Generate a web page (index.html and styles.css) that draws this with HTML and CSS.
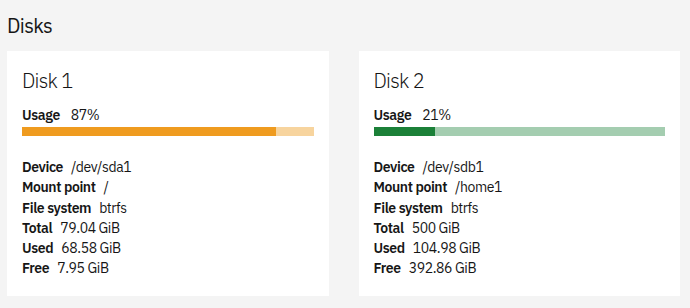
FILE: index.html
```html
<!DOCTYPE html>
<html lang="en">
<head>
<meta charset="utf-8">
<title>Disks</title>
<link rel="stylesheet" href="styles.css">
</head>
<body>
<h1 class="page-title">Disks</h1>
<div class="grid">
  <section class="card">
    <h2 class="card-title">Disk 1</h2>
    <div class="usage"><span class="label">Usage</span><span class="value">87%</span></div>
    <div class="bar bar-orange"><div class="fill" style="width:87%"></div></div>
    <dl class="details">
      <div class="row"><dt>Device</dt><dd>/dev/sda1</dd></div>
      <div class="row"><dt>Mount point</dt><dd>/</dd></div>
      <div class="row"><dt>File system</dt><dd>btrfs</dd></div>
      <div class="row"><dt>Total</dt><dd>79.04 GiB</dd></div>
      <div class="row"><dt>Used</dt><dd>68.58 GiB</dd></div>
      <div class="row"><dt>Free</dt><dd>7.95 GiB</dd></div>
    </dl>
  </section>
  <section class="card">
    <h2 class="card-title">Disk 2</h2>
    <div class="usage"><span class="label">Usage</span><span class="value">21%</span></div>
    <div class="bar bar-green"><div class="fill" style="width:21%"></div></div>
    <dl class="details">
      <div class="row"><dt>Device</dt><dd>/dev/sdb1</dd></div>
      <div class="row"><dt>Mount point</dt><dd>/home1</dd></div>
      <div class="row"><dt>File system</dt><dd>btrfs</dd></div>
      <div class="row"><dt>Total</dt><dd>500 GiB</dd></div>
      <div class="row"><dt>Used</dt><dd>104.98 GiB</dd></div>
      <div class="row"><dt>Free</dt><dd>392.86 GiB</dd></div>
    </dl>
  </section>
</div>
</body>
</html>
```
FILE: styles.css
```css
html, body {
  margin: 0;
  padding: 0;
  background: #f4f4f4;
  color: #161616;
  font-family: "IBM Plex Sans", "Noto Sans", sans-serif;
}
.page-title {
  margin: 0;
  padding: 12px 7px 0 7px;
  font-size: 20px;
  font-weight: 400;
  line-height: 28px;
  letter-spacing: -0.6px;
}
.grid {
  display: grid;
  grid-template-columns: 1fr 1fr;
  gap: 30px;
  padding: 11px 10px 0 7px;
}
.card {
  background: #fff;
  padding: 16px 15px 17px 15px;
}
.card-title {
  margin: 0;
  font-size: 20px;
  font-weight: 300;
  line-height: 28px;
  letter-spacing: -0.7px;
}
.usage {
  margin-top: 11px;
  font-size: 14px;
  line-height: 18px;
  display: flex;
  gap: 11px;
}
.label, dt {
  font-weight: 600;
  letter-spacing: -0.4px;
}
.value, dd {
  letter-spacing: -0.4px;
}
.bar {
  margin-top: 3px;
  height: 9px;
  display: flex;
}
.bar .fill { height: 100%; }
.bar-orange { background: #f7d49e; }
.bar-orange .fill { background: #ef9b1f; }
.bar-green { background: #a4cdb0; }
.bar-green .fill { background: #1b8038; }
.details {
  margin: 21px 0 0 0;
  font-size: 14px;
  line-height: 20.3px;
}
.row {
  display: flex;
  gap: 8px;
}
dd { margin: 0; }
```
